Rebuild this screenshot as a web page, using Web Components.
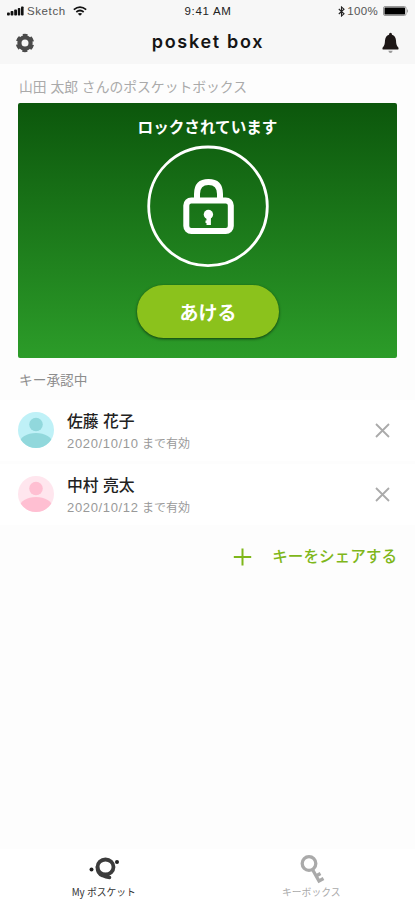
<!DOCTYPE html>
<html lang="ja">
<head>
<meta charset="utf-8">
<meta name="viewport" content="width=device-width, initial-scale=1">
<title>posket box</title>
<style>
  body {
    margin: 0;
    background: #fdfdfd;
    color: #222;
    font-family: 'Liberation Sans', 'Noto Sans CJK JP', sans-serif;
  }
</style>
</head>
<body>
<posket-app></posket-app>

<script>
class PosketElement extends HTMLElement {
  constructor() {
    super()
    this.attachShadow({ mode: 'open' })
  }

  connectedCallback() {
    const template = document.createElement('template')

    template.innerHTML = this.render()
    this.shadowRoot.replaceChildren(template.content.cloneNode(true))
  }
}

class StatusBar extends PosketElement {
  render() {
    return `
      <style>
        :host {
          display: grid;
          grid-template-columns: 1fr auto 1fr;
          align-items: center;
          height: 22px;
          padding: 0 6px 0 7px;
          font-size: 11.5px;
          line-height: 22px;
          color: #555;
        }
        div { display: flex; align-items: center; }
        svg { display: block; flex: none; }
        .carrier { margin: 0 7px 0 3px; letter-spacing: .6px; }
        .time { color: #222; letter-spacing: .7px; }
        .right { justify-content: flex-end; }
        .level { margin: 0 5px 0 2px; letter-spacing: .35px; }
      </style>
      <div>
        <svg width="17" height="10" fill="#111">
          <rect y="6.5" width="2.8" height="3" rx=".8"/>
          <rect x="3.6" y="5" width="2.8" height="4.5" rx=".8"/>
          <rect x="7.2" y="3.5" width="2.8" height="6" rx=".8"/>
          <rect x="10.8" y="2" width="2.5" height="7.5" rx=".8"/>
          <rect x="14" y=".5" width="2.6" height="9" rx=".8"/>
        </svg>
        <span class="carrier">Sketch</span>
        <svg width="14" height="10" viewBox="0 0 14 10" fill="none" stroke="#111" stroke-width="1.7">
          <path d="M.8 3.6Q7-1.4 13.2 3.6M3.3 6Q7 3 10.7 6"/>
          <path d="M7 9.8L4.8 7.7Q7 6.2 9.2 7.7Z" fill="#111" stroke="none"/>
        </svg>
      </div>
      <span class="time">9:41 AM</span>
      <div class="right">
        <svg width="7" height="11" viewBox="0 0 7 11" fill="none" stroke="#222" stroke-width="1.1">
          <path d="M.8 3L6 7.8 3.5 10V1L6 3.2.8 8"/>
        </svg>
        <span class="level">100%</span>
        <svg width="26" height="10" viewBox="0 0 26 10">
          <rect x=".5" y=".5" width="22.5" height="9" rx="1.5" fill="none" stroke="#999"/>
          <rect x="1.5" y="1.5" width="20.5" height="7" rx=".5"/>
          <path d="M24 3q2 2 0 4z" fill="#999"/>
        </svg>
      </div>`
  }
}

class AppHeader extends PosketElement {
  render() {
    return `
      <style>
        :host {
          display: flex;
          align-items: center;
          justify-content: space-between;
          height: 42px;
          padding: 0 15px;
        }
        svg { display: block; }
        h1 {
          margin: 0;
          padding-bottom: 2px;
          font: 600 18px/36px Inter, sans-serif;
          letter-spacing: 1.7px;
          color: #151515;
        }
      </style>
      <svg width="20" height="20" viewBox="-10 -10 20 20" fill="none" stroke="#4b4b4b">
        <circle r="5.6" stroke-width="4.2"/>
        <circle r="7.8" stroke-width="2.8" stroke-dasharray="4.8 3.368" stroke-dashoffset="2.4" transform="rotate(-90)"/>
      </svg>
      <h1>posket box</h1>
      <svg width="19" height="22" viewBox="0 0 19 22" fill="#1d1716">
        <path d="M9.5.8Q11 .8 11 2.7Q14.7 4 15 8.5Q15.1 13.5 17.2 15.2Q18.2 17.5 16.5 17.5H2.5Q.8 17.5 1.8 15.2Q3.9 13.5 4 8.5Q4.3 4 8 2.7Q8 .8 9.5 .8Z"/>
        <path d="M7.3 18.7H11.7Q11.2 21 9.5 21Q7.8 21 7.3 18.7Z" fill="#999"/>
      </svg>`
  }
}

class LockCard extends PosketElement {
  render() {
    return `
      <style>
        :host {
          display: flex;
          flex-direction: column;
          align-items: center;
          box-sizing: border-box;
          height: 255px;
          padding-top: 13px;
          border-radius: 2px;
          background: linear-gradient(#0c570c, #2c9c29);
          color: #fff;
        }
        .status {
          font-size: 15.6px;
          font-weight: 700;
          line-height: 24px;
        }
        svg { display: block; margin-top: 5px; }
        button {
          width: 142px;
          height: 53px;
          margin: 18px 0 0 1px;
          padding: 0 0 1px;
          border: 0;
          border-radius: 27px;
          background: #8bc21c;
          box-shadow: 0 1px 3px rgba(0, 0, 0, .6);
          color: #fff;
          font: inherit;
          font-size: 19px;
          font-weight: 700;
        }
      </style>
      <div class="status"><slot name="status"></slot></div>
      <svg width="122" height="122" viewBox="0 0 122 122" fill="none" stroke="#fff">
        <circle cx="61" cy="61.3" r="59.3" stroke-width="2.8"/>
        <rect x="39.3" y="55.5" width="44.5" height="30.5" rx="5" stroke-width="6"/>
        <path d="M50 54V49Q50 37 61.5 37Q73 37 73 49V54" stroke-width="6"/>
        <g fill="#fff" stroke="none">
          <circle cx="61.4" cy="69.5" r="4.7"/>
          <path d="M59.5 72H63.9V80H59.5V78H58.5V75.5H59.5Z"/>
        </g>
      </svg>
      <button><slot></slot></button>`
  }
}

class KeyRow extends PosketElement {
  render() {
    return `
      <style>
        :host {
          display: flex;
          align-items: center;
          height: 61px;
          padding: 0 25px 0 18px;
          background: #fff;
        }
        svg { display: block; flex: none; }
        .avatar { margin-top: -1px; border-radius: 50%; background: var(--avatar-light); }
        .text { flex: 1; margin-left: 13px; padding-top: 2px; }
        .name {
          font-size: 15.8px;
          font-weight: 500;
          line-height: 24px;
          color: #222;
        }
        .date {
          font-size: 12px;
          line-height: 20px;
          color: #999;
        }
      </style>
      <svg class="avatar" width="36" height="36" viewBox="0 0 36 36" fill="var(--avatar-dark)">
        <circle cx="18" cy="12.5" r="6.8"/>
        <ellipse cx="18" cy="31" rx="16.5" ry="10"/>
      </svg>
      <div class="text">
        <div class="name"><slot></slot></div>
        <div class="date"><slot name="date"></slot></div>
      </div>
      <svg width="15" height="15" viewBox="0 0 15 15" stroke="#aaa" stroke-width="1.8">
        <path d="M1 1L14 14M14 1L1 14"/>
      </svg>`
  }
}

class ShareLink extends PosketElement {
  render() {
    return `
      <style>
        :host {
          display: flex;
          align-items: center;
          justify-content: flex-end;
          height: 24px;
          padding: 0 18px;
          color: #7fb71a;
          font-size: 15.6px;
          font-weight: 500;
          line-height: 24px;
        }
        svg { margin-right: 20px; }
      </style>
      <svg width="19" height="18" viewBox="0 0 19 18" fill="none" stroke="currentColor" stroke-width="2">
        <path d="M9.5 .5V17.5M.8 9H18.2"/>
      </svg>
      <slot></slot>`
  }
}

class TabBar extends PosketElement {
  render() {
    return `
      <style>
        :host {
          display: grid;
          grid-template-columns: 1fr 1fr;
          height: 51px;
          background: #fff;
          font-family: 'Noto Sans CJK JP', sans-serif;
          font-size: 9.8px;
          line-height: 14px;
        }
        .tab {
          display: flex;
          flex-direction: column;
          align-items: center;
          padding-top: 5px;
          color: #aaa;
        }
        .active { color: #333; }
        svg { display: block; margin-bottom: 1px; }
      </style>
      <div class="tab active">
        <svg width="32" height="30" viewBox="0 0 32 30" fill="none" stroke="#3c3c3c">
          <ellipse cx="17.5" cy="13" rx="8" ry="7.5" stroke-width="3.8"/>
          <path d="M9.5 13Q9 19.5 14.5 21.500Q18 23.300 21.500 23.500" stroke-width="3.600" stroke-linecap="round"/>
          <circle cx="3.500" cy="15.500" r="2" fill="#222" stroke="none"/>
          <circle cx="29" cy="8" r="2" fill="#222" stroke="none"/>
        </svg>
        <slot name="home"></slot>
      </div>
      <div class="tab">
        <svg width="28" height="30" viewBox="0 0 28 30" fill="none" stroke="#aaa" stroke-width="3.300">
          <circle cx="12" cy="9.500" r="6.800"/>
          <path d="M15.500 15.500L22 27L26.500 24.500M19 22L23.500 19.500"/>
        </svg>
        <slot name="keys"></slot>
      </div>`
  }
}

class PosketApp extends PosketElement {
  render() {
    return `
      <style>
        :host {
          display: flex;
          flex-direction: column;
          height: 900px;
        }
        header { height: 64px; flex: none; background: #f7f7f7; }
        main { flex: 1; }
        h2 {
          margin: 0;
          padding-left: 19px;
          font-size: 13.8px;
          font-weight: 400;
          line-height: 20px;
          color: #aaa;
        }
        .owner { padding-top: 14px; }
        .pending { padding: 13px 0 9px 19px; font-size: 13.7px; color: #8d8d8d; }
        lock-card { margin: 5px 18px 0; }
        key-row + key-row { margin-top: 3px; }
        .blue { --avatar-light: #bff1f7; --avatar-dark: #91d8dc; }
        .pink { --avatar-light: #ffe6ee; --avatar-dark: #ffbfd2; }
        .digits { font-size: 13px; letter-spacing: .65px; }
        share-link { margin-top: 20px; }
      </style>
      <header>
        <status-bar></status-bar>
        <app-header></app-header>
      </header>
      <main>
        <h2 class="owner">山田 太郎 さんのポスケットボックス</h2>
        <lock-card><span slot="status">ロックされています</span>あける</lock-card>
        <h2 class="pending">キー承認中</h2>
        <key-row class="blue">佐藤 花子<span slot="date"><span class="digits">2020/10/10</span> まで有効</span></key-row>
        <key-row class="pink">中村 亮太<span slot="date"><span class="digits">2020/10/12</span> まで有効</span></key-row>
        <share-link>キーをシェアする</share-link>
      </main>
      <tab-bar>
        <span slot="home">My ポスケット</span>
        <span slot="keys">キーボックス</span>
      </tab-bar>`
  }
}

customElements.define('status-bar', StatusBar)
customElements.define('app-header', AppHeader)
customElements.define('lock-card', LockCard)
customElements.define('key-row', KeyRow)
customElements.define('share-link', ShareLink)
customElements.define('tab-bar', TabBar)
customElements.define('posket-app', PosketApp)
</script>
</body>
</html>
